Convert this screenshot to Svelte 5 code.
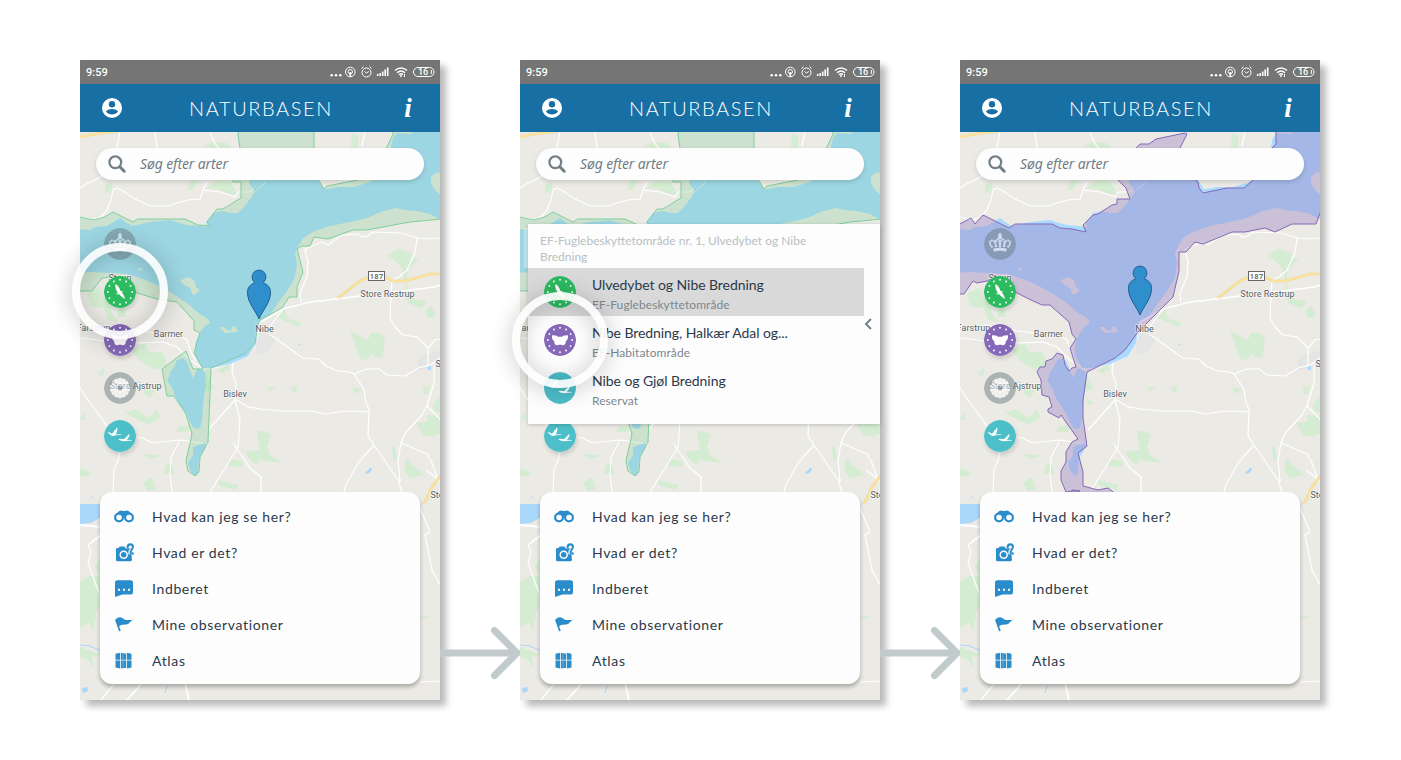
<script>
  const menu = [
    { icon: 'binoculars', label: 'Hvad kan jeg se her?' },
    { icon: 'camera', label: 'Hvad er det?' },
    { icon: 'chat', label: 'Indberet' },
    { icon: 'flag', label: 'Mine observationer' },
    { icon: 'atlas', label: 'Atlas' }
  ];
  const layers = ['crown', 'bird', 'butterfly', 'flower', 'geese'];
  const areas = [
    { icon: 'bird', title: 'Ulvedybet og Nibe Bredning', kind: 'EF-Fuglebeskyttetområde', selected: true },
    { icon: 'butterfly', title: 'Nibe Bredning, Halkær Adal og...', kind: 'EF-Habitatområde' },
    { icon: 'geese', title: 'Nibe og Gjøl Bredning', kind: 'Reservat' }
  ];
  const screens = [
    { zone: 'birds', ring: 183, pinX: 259, pinY: 319 },
    { zone: 'birds', ring: 232, popup: true },
    { zone: 'habitat', pinX: 260, pinY: 315 }
  ];
  const stars = Array.from({ length: 12 }, (_, i) => {
    const a = (i * Math.PI) / 6;
    return { x: 16 + 12.2 * Math.sin(a), y: 16 - 12.2 * Math.cos(a) };
  });

  const zones = {
    birds: '80,217 93,220 105,217 113,212 133,222 138,219 185,219 198,225 211,226 207,222 217,209 223,209 241,198 241,182 233,182 232,180 240,148 238,135 239,130 314,130 314,172 324,189 327,186 358,180 387,147 393,134 393,130 442,130 442,219 410,222 367,230 353,230 328,239 314,237 310,246 302,246 297,249 303,272 297,287 297,297 289,297 282,308 260,320 258,325 255,343 245,354 211,368 208,442 200,457 199,472 195,476 188,471 186,461 192,434 186,414 174,396 167,396 162,369 186,351 193,369 203,369 194,353 200,333 194,330 194,321 177,302 157,299 137,293 125,286 119,277 110,277 102,278 92,291 78,291 78,216',
    habitat: '78,225 91,218 95,224 103,215 129,228 135,224 172,224 180,228 192,229 206,232 203,225 213,215 218,214 232,205 237,204 237,199 250,199 246,188 238,180 250,160 257,147 260,144 269,144 276,139 305,133 307,134 300,148 308,170 315,180 318,182 319,188 323,193 347,188 364,188 373,180 392,148 396,144 396,130 442,130 442,208 436,224 412,224 395,232 385,228 365,232 352,232 323,244 315,242 306,252 299,252 299,271 293,297 270,320 258,332 245,350 235,358 207,372 203,400 203,418 207,446 198,453 203,472 203,486 218,490 228,488 236,494 236,500 192,500 192,490 200,491 192,491 186,492 181,480 181,471 186,462 186,452 192,442 198,439 181,415 179,418 168,412 168,409 172,407 169,397 162,395 161,380 157,372 160,367 165,367 166,361 172,359 177,353 183,355 185,365 189,371 192,368 196,367 190,348 196,339 192,334 189,322 170,305 162,305 151,300 137,293 125,286 112,279 107,281 97,283 93,281 84,294 78,294'
  };

  const water = [
    '78,229 90,230 95,227 107,226 120,218 125,222 132,226 150,222 170,220 176,222 187,225 198,226 207,227 206,222 208,220 213,213 222,211 230,213 238,213 241,210 247,203 253,195 254,190 249,183 250,176 316,176 318,180 324,189.5 337,187 353,187 367,183 375,179 390,150 393,138 397,133 410,134 416,130 442,130 442,172 435,173 431,177 431,183 435,190 442,196 442,220 437,218 430,214 417,211 405,210 397,208 383,211 367,218 350,222 330,226 313,232 303,238 299,245 295,253 297,263 295,277 288,290 278,303 270,315 259,321 256,343 248,356 230,364 210,368.5 202,368 195,355 195,343 200,333 204,327 210,323 208,319 197,312 187,303 170,292 153,283 137,277 127,274 110,273 90,272 78,273',
    '183,358 187,362 190,371 193,378 196,372 198,368 205,372 206,385 204,396 203,407 202,420 200,428 195,429 193,427 190,422 187,415 177,400 172,388 167,380 169,377 170,372 174,367 177,360',
    '193,447 205,443 206,447 203,452 199,458 198,473 195,476 190,470 188,463 193,455'
  ];
  const islands = [
    '180,280 184,279 188,277 194,280 196,287 200,290 197,293 193,295 190,288 183,284',
    '138,268.500 142,268 143,270 139,270.500',
    '219,327 224,327 227,330 231,331 232,327 235,326 238,332 231,332.500 225,333 221,329'
  ];
  const woods = [
    '105,184 113,183 111,192 105,193', '188,190 190,180 198,180 193,189', '203,147 213,142 227,143 231,149',
    '207,188 215,180 230,181 238,195 227,193 217,189', '352,134 358,135 358,148 351,148',
    '87,293 100,288 103,298 110,300 111,312 118,322 108,320 104,308 90,306', '119,309 125,306 125,317 117,317',
    '388,255 398,249 412,253 410,260 419,258 411,267 407,268 407,287 420,307 410,303 405,297 406,285 402,268 397,263',
    '425,310 432,306 435,317 428,318',
    '350,330 357,335 368,340 371,333 380,333 385,340 382,358 376,357 371,353 367,360 360,359',
    '257,430 271,434 267,447 270,455 282,463 260,460 257,465 250,460 245,452 260,450',
    '407,457 412,465 425,475 410,478 404,470', '416,423 427,422 427,415 440,415 440,433 432,437 423,435',
    '433,405 440,395 440,413 434,411', '265,387 275,387 270,392', '291,387 297,386 296,393 292,392',
    '353,387 362,390 354,394', '407,300 427,300 422,308 410,304', '392,448 395,446 397,459 393,460',
    '423,387 430,386 428,394 423,394', '430,310 435,312 433,319', '285,308 287,318 302,323 298,327 288,322 278,318',
    '132,350 144,343 149,352 163,352 167,365 155,370 148,366 138,359', '97,374 105,367 103,376',
    '146,387 155,391 150,397 143,393', '125,412 137,410 148,418 157,410 160,418 150,424 138,420',
    '145,454 159,455 157,458 147,458', '167,462 174,468 173,475 164,473', '143,483 152,477 156,489 147,491',
    '80,468 92,472 87,477 80,476', '205,372 213,388 206,392', '207,398 213,403 207,406',
    '229,459 243,461 242,467 228,466', '217,480 238,485 237,490 220,486', '217,371 228,364 230,369 222,373',
    '82,415 85,412 85,420 81,420', '178,427 190,425 188,432 177,432', '100,558 95,566 99,576 90,576 80,582 80,628 89,622 93,632 96,612 101,604',
    '80,647 101,655 92,657 94,668 88,660 80,657', '420,617 429,616 429,618 420,618'
  ];
  const roads = [
    '80,188 90,182 95,180 106,174', '80,217 92,220 101,217 107,210 111,200 113,190 117,188 123,191 133,198 150,206 168,206 187,200 200,199 203,190 207,182',
    '203,190 220,192 235,197 238,192 250,192 260,183', '120,132 117,148', '155,132 157,148', '210,132 214,142 220,150',
    '365,132 362,146', '440,238 430,239 417,238 402,233 372,232 368,236 362,237 358,234 342,235 328,245 322,242 305,249 308,263 307,277 300,293 301,302',
    '417,238 415,253 407,270 400,276 392,280 391,295 390,318 396,328 403,335 417,337 428,348 428,365', '428,348 435,340 440,339',
    '268,333 303,358 319,359 326,366 338,371 350,372 354,374 367,369 379,369 387,375 405,376 418,368 430,365 440,358',
    '354,374 364,389 366,403 369,409 368,436 374,445 398,480 402,492', '374,445 358,463 345,487 344,492',
    '250,407 260,409 285,411 310,411 326,414 345,411 369,412', '434,363 434,383 427,406 422,415 405,433 401,443 398,460 400,482',
    '401,443 413,448 427,454 432,463 437,477', '427,406 440,419', '233,443 250,468 261,477 261,492',
    '80,338 90,339 105,341 140,343 163,342 177,347 190,360 203,368', '105,325 137,331 165,334 180,336 187,340 190,350 196,361',
    '233,362 232,372 236,383 235,400 240,420 238,447 224,470 210,492', '235,399 250,408', '235,400 208,430',
    '80,388 90,403 103,420 109,430', '137,437 143,438 152,443 180,440 208,444', '180,440 171,457 170,475 172,492',
    '120,452 118,460 114,470 113,492', '101,536 88,545 91,552 88,563 99,593', '88,545 101,534',
    '101,700 115,683', '420,508 430,532 425,535 432,570 440,585', '420,682 440,681', '426,470 440,481'
  ];
</script>

{#snippet glyph(name)}
  <svg class="disc {name}" viewBox="0 0 32 32">
    <circle class="base" cx="16" cy="16" r="16" />
    {#if name === 'bird' || name === 'butterfly'}
      {#each stars as s}<circle cx={s.x} cy={s.y} r="0.95" fill="#fff" />{/each}
    {/if}
    {#if name === 'bird'}
      <path fill="#fff" d="M11.200 8.500c.9-.3 1.900.3 2.600 1.300 1.300 1.500 2 3.200 2.700 4.900 1.600 1.500 2.700 3.400 3.600 5.400.5 1 .7 2 .7 2.900-1.700-.6-3.800-2.400-5.100-4.200-1.800-1.700-3-3.600-3.700-5.400-.6-1.700-.9-3.400-.8-4.900zM15.500 15.500l4-.5-2.500 1.900-1.500 1.500-4.300-.5 3-1z" />
    {:else if name === 'butterfly'}
      <path fill="#fff" d="M8 11.500c2.700-.5 5 .3 7 1.800l.5-.8h1l.5.8c2-1.500 4.300-2.300 7-1.800.4 2.600-.6 4.600-2.200 5.500.1 2.300-.8 4-2.500 4.200-1.100.2-2 0-2.600-.6l-.7.500-.7-.5c-.6.6-1.500.8-2.600.6-1.700-.2-2.600-1.900-2.500-4.200C8.600 16.100 7.600 14.100 8 11.500z" />
    {:else if name === 'geese'}
      <path fill="#fff" d="M3.200 12.200c1.800-.3 3.500.4 4.700 1.700L13.200 7.200c.6 2.600-.3 4.900-1.500 7.100l6 .1v.6l-6.500.3c-1.900 1.200-3.700.5-5.200-.8-.7-.9-1.600-1.600-2.800-2.300zM14.500 19.200c2.300-.7 4.100-.2 5.600.1l5.300-5.500c.4 2.700-1 4.600-2.800 6l5.300.2v.6l-6.500.3c-2.600.7-4.500-.1-6.400-1.100z" />
    {:else if name === 'flower'}
      {#each Array(14) as _, i}
        <path fill="#fff" d="M15 13 14 6.500l2-.7 2 .7L17 13z" transform="rotate({i * 25.71} 16 16)" />
      {/each}
      <circle cx="16" cy="16" r="5.500" fill="#fff" /><circle cx="16" cy="16" r="2.500" fill="#6f7e86" />
    {:else}
      <g fill="none" stroke="#fff" stroke-width="1.900">
        <path d="M8.500 19.500C5 16 5 12.500 8 12.500s4.200 3 3.500 7M23.500 19.500c3.500-3.500 3.500-7 .5-7s-4.200 3-3.500 7M12.500 19c-2-5.500-.5-7.500 1-7.500s2.500 3 2.500 8c0-5 1-8 2.500-8s3 2 1 7.500" stroke-dasharray="2 .6" />
        <path d="M16 4.800v5M14 7h4" stroke-width="1.300" />
        <path d="M9.500 22.200c4-1.200 9-1.200 13 0" stroke-width="3" />
      </g>
      <circle cx="16" cy="9.600" r="2" fill="#fff" />
    {/if}
  </svg>
{/snippet}

{#snippet menuIcon(name)}
  <svg class="mi" viewBox="0 0 20 20" fill="#2b8ccb">
    {#if name === 'binoculars'}
      <path d="M4 5.500C4.600 3.400 7.800 2.800 9 4h2c1.200-1.200 4.400-.6 5 1.500l2.500 4H1.500z" />
      <circle cx="5" cy="10.500" r="3.900" fill="#fdfdfd" stroke="#2b8ccb" stroke-width="2.200" />
      <circle cx="15" cy="10.500" r="3.900" fill="#fdfdfd" stroke="#2b8ccb" stroke-width="2.200" />
      <circle cx="10" cy="9" r="1.300" />
    {:else if name === 'camera'}
      <path d="M3.300 5h1.300l1-1.500h5L11.500 5h5.300L18 17a1.400 1.400 0 0 1-1.300 1.200H3.300A1.300 1.300 0 0 1 2 17V6.300A1.300 1.300 0 0 1 3.300 5z" />
      <circle cx="9.700" cy="11.800" r="3.500" fill="none" stroke="#fdfdfd" stroke-width="1.500" />
      <path d="M13.500 5.500c0-4 5.400-4.500 5.400-1 0 2.500-3.200 2.800-2.400 6.500" fill="none" stroke="#fdfdfd" stroke-width="4.200" />
      <path d="M13.800 5.500 13.600 4c.3-3.600 5.300-3.500 5.300 0 0 2.700-3.200 3-2.400 6.700" fill="none" stroke="#2b8ccb" stroke-width="2.100" />
      <circle cx="18.500" cy="10.500" r="1.300" />
    {:else if name === 'chat'}
      <path d="M3.300 1.200h13.400A2.300 2.300 0 0 1 19 3.500v9.800a2.300 2.300 0 0 1-2.300 2.300H8.500L1 18V3.500a2.300 2.300 0 0 1 2.300-2.300z" />
      <path fill="#fff" d="M4 9.800h2v2H4zM9 9.800h2v2H9zM14 9.800h2v2h-2z" />
    {:else if name === 'flag'}
      <path d="M1 4.800C4.500 1.500 7 1.600 9.600 4c2.800 1.700 6 1 9.400.8-2.200 1.300-3.100 2.600-4.800 4.300-2.600 1.200-6.300-.2-9.100 2.300l1.700 4.400-1.800.5z" />
    {:else}
      <path d="m1.500 2.700 4.700-1v7H1.500zM12.800 1.700l4.700 1v6h-4.700zM1.500 9.600h4.700v8l-4.700-1zM12.800 9.600h4.700v7l-4.700 1z" />
      <path d="m7 1.700 5 1v6H7zM7 9.600h5v7.200l-5 .8z" /><path d="M9 2v15.300" stroke="#7db8e0" stroke-width=".8" />
    {/if}
  </svg>
{/snippet}

{#snippet map(s)}
  <svg class="map" viewBox="80 132 360 568">
    <rect x="80" y="132" width="360" height="568" fill="#ebeae5" />
    <path d="M257 322l13 8 6 9-8 14-12 2zM418 358l22-8v18l-22 2z" fill="#e5e5e6" />
    {#each woods as p}<polygon points={p} fill="#d4ecd1" />{/each}
    <polygon points="80,504 101,504 101,517 91,523 80,524" fill="#aad8fb" />
    <path d="M365 473l6-6 1 3-4 4zM428 367l3-1v4h-3zM298 343l3 2-2 1zM82 688l5-1 1 4-5 2z" fill="#aad8fb" />
    <path d="M80 645l10 1 11 5M90 499l3-3M165 693l2-7" fill="none" stroke="#aad8fb" />
    <g fill="none" stroke="#fff" stroke-width="1.200" stroke-linejoin="round">
      {#each roads as r}<polyline points={r} />{/each}
      <polyline points="80,525 101,527" stroke-width="2" />
      <polyline points="127,700 142,683" stroke-width="1.800" /><polyline points="189,700 185,683" stroke-width="1.800" />
      <polyline points="202,369 213,368 233,362 245,355 257,338 259,323 283,309 310,302 337,299 360,296 410,290 435,287 440,285" stroke-width="1.600" />
      <polyline points="270,327 283,309" />
    </g>
    {#each water as p}<polygon points={p} fill="#aadaff" />{/each}
    {#each islands as p}<polygon points={p} fill="#ebeae5" />{/each}
    <path d="M252 194l14-12" fill="none" stroke="#e8f0ee" />
    <g fill="none" stroke="#f4d58a" stroke-width="2.600">
      <polyline points="80,137 95,134 112,132 125,129" />
      <polyline points="338,298 360,281 370,277 385,277 393,281 405,281 430,274 440,274" />
      <polyline points="441,475 432,487 424,504" />
    </g>
    <g fill="none" stroke="#fde6a0" stroke-width="1.400">
      <polyline points="80,137 95,134 112,132 125,129" />
      <polyline points="338,298 360,281 370,277 385,277 393,281 405,281 430,274 440,274" />
      <polyline points="441,475 432,487 424,504" />
    </g>
    <polygon class="zone {s.zone}" points={zones[s.zone]} />
    <rect x="368.500" y="271.500" width="16" height="9" fill="#fff" stroke="#666" />
    <g class="names">
      <text x="376.700" y="278.800" class="num">187</text>
      <text x="387.500" y="297.300">Store Restrup</text>
      <text x="264.500" y="332.300">Nibe</text>
      <text x="168.500" y="336.800">Barmer</text>
      <text x="235" y="397.300">Bislev</text>
      <text x="135.500" y="389.300">Store Ajstrup</text>
      <text x="93.500" y="331">Farstrup</text>
      <text x="435.500" y="367.300" class="cut">Store</text>
      <text x="430.500" y="498" class="cut">Store</text>
      <text x="120" y="281">Staun</text>
    </g>
    {#if s.pinX}
      <g transform="translate({s.pinX} {s.pinY})" fill="#2e8fcc" stroke="#1f5e8c" stroke-width="1">
        <path d="M0 0C-3-8-11.500-16-11.500-26.500c0-5 2.500-8 7-9.500h9c4.500 1.500 7 4.500 7 9.500C11.500-16 3-8 0 0z" />
        <circle cy="-42" r="6.900" />
        <path d="M-4-37h8v4h-8z" stroke="none" />
      </g>
    {/if}
  </svg>
{/snippet}

{#snippet arrow()}
  <svg class="arrow" viewBox="0 0 80 60">
    <path d="M0 30h77M54.500 7.500 77 30 54.500 52.500" fill="none" stroke="#c2cbcc" stroke-width="7" stroke-linecap="round" stroke-linejoin="round" />
  </svg>
{/snippet}

<main>
  {#each screens as s, i}
    {#if i}{@render arrow()}{/if}
    <section class="phone">
      <div class="status">
        <span>9:59</span>
        <svg viewBox="0 0 108 14" fill="none" stroke="#fff" stroke-width="1">
          <g fill="#fff" stroke="none"><circle cx="3.700" cy="10.300" r="1.300" /><circle cx="8" cy="10.300" r="1.300" /><circle cx="12.300" cy="10.300" r="1.300" /></g>
          <circle cx="22.300" cy="7" r="4.800" /><circle cx="22.300" cy="6.700" r="2.200" /><path d="M22.300 7v5" stroke-width="1.500" />
          <circle cx="38.500" cy="7.500" r="4.500" /><path d="M36.500 6.500l2 1.500 2.300-1.500M33.500 3.500l2-1.900M43.500 3.500l-2-1.900" />
          <path d="M49.700 11V9M52.200 11V8M54.700 11V6.500M57.200 11V4.500M59.700 11V2.500" stroke-width="1.600" />
          <path d="M67 5.500c3.500-3.300 8.500-3.300 12 0M69 7.700c2.500-2.200 5.500-2.200 8 0M71 9.700c1.200-1.100 2.800-1.100 4 0" stroke-width="1.400" /><circle cx="73" cy="11" r="1" fill="#fff" stroke="none" /><path d="M76.500 9v3" />
          <rect x="85.500" y="2.500" width="20.500" height="9" rx="4.500" /><path d="M103.300 5v4" />
          <text x="95" y="10.200" class="batt">16</text>
        </svg>
      </div>
      <header>
        <svg class="user" viewBox="0 0 20 20"><circle cx="10" cy="10" r="10" fill="#fff" /><circle cx="10" cy="6.200" r="3.200" fill="#176fa4" /><path d="M4 13.500c1.800-3.300 10.200-3.300 12 0-2.600 4-9.400 4-12 0z" fill="#176fa4" /></svg>
        <h1>NATURBASEN</h1>
        <i>i</i>
      </header>
      <div class="body">
        {@render map(s)}
        <div class="search">
          <svg viewBox="0 0 18 18" fill="none" stroke="#727f86"><circle cx="7.300" cy="7.300" r="5.900" stroke-width="2.200" /><path d="m11.800 11.800 4.400 4.400" stroke-width="3" stroke-linecap="round" /></svg>
          <span>Søg efter arter</span>
        </div>
        <div class="layers">
          {#each layers as l}{@render glyph(l)}{/each}
        </div>
        {#if s.popup}
          <div class="popup">
            <p>EF-Fuglebeskyttetområde nr. 1, Ulvedybet og Nibe Bredning</p>
            {#each areas as a}
              <div class="area" class:selected={a.selected}>
                {@render glyph(a.icon)}
                <div><b>{a.title}</b><small>{a.kind}</small></div>
              </div>
            {/each}
            <svg class="chev" viewBox="0 0 8 12"><path d="M7 1 2 6l5 5" fill="none" stroke="#76828a" stroke-width="2" /></svg>
          </div>
        {/if}
        <nav>
          {#each menu as m}
            <div class="item">{@render menuIcon(m.icon)}<span>{m.label}</span></div>
          {/each}
        </nav>
      </div>
      {#if s.ring}<div class="ring" style="top: {s.ring}px"></div>{/if}
    </section>
  {/each}
</main>

<style>
  :global(body) { margin: 0; background: #fff; overflow: hidden; }
  main { box-sizing: border-box; display: flex; width: 1401px; height: 760px; padding: 60px 80px; background: #fff; font-family: Lato, sans-serif; }
  .phone { position: relative; flex: none; width: 360px; height: 640px; box-shadow: 6px 6px 7px rgba(0, 0, 0, .28); }
  .arrow { position: relative; z-index: 2; flex: none; width: 80px; height: 60px; margin-top: 563px; }
  .status { box-sizing: border-box; display: flex; align-items: center; justify-content: space-between; height: 24px; padding: 0 4px 0 6px; background: #757575; color: #fff; font: 500 11px Roboto, sans-serif; }
  .status svg { width: 108px; height: 14px; }
  .batt { font: 500 9px Roboto, sans-serif; fill: #fff; stroke: none; text-anchor: middle; }
  header { box-sizing: border-box; display: flex; align-items: center; justify-content: space-between; height: 48px; padding: 0 26px 0 22px; background: #176fa4; color: #fff; }
  .user { width: 20px; height: 20px; }
  h1 { margin: 0 2px 0 0; font: 300 20px Lato, sans-serif; letter-spacing: 1.600px; }
  i { width: 12px; font: italic bold 27px "Liberation Serif", serif; text-align: center; }
  .body { position: relative; display: flex; flex-direction: column; box-sizing: border-box; height: 568px; padding: 16px 16px; }
  .map { position: absolute; inset: 0; width: 360px; height: 568px; }
  .zone { stroke-width: 1; stroke-linejoin: round; }
  .birds { fill: rgba(115, 203, 144, .26); stroke: #7fcf9d; }
  .habitat { fill: rgba(158, 137, 199, .43); stroke: #8468b8; }
  .names { font: 9px Roboto, sans-serif; fill: #565d66; text-anchor: middle; stroke: rgba(255, 255, 255, .6); stroke-width: 1.500px; paint-order: stroke; }
  .num { font-size: 7.500px; font-weight: 500; letter-spacing: .4px; }
  .names .cut { text-anchor: start; }
  .search { position: relative; flex: none; box-sizing: border-box; display: flex; align-items: center; gap: 14px; height: 32px; padding: 0 12px; border-radius: 16px; background: #fdfdfd; box-shadow: 0 2px 4px rgba(0, 0, 0, .15); color: #727f86; font: italic 14px "Noto Sans", sans-serif; letter-spacing: -.12px; }
  .search span { padding-bottom: 2px; }
  .search svg { width: 18px; height: 18px; }
  .layers { position: relative; display: flex; flex-direction: column; gap: 16px; padding: 48px 8px 0; }
  .disc { flex: none; width: 32px; height: 32px; border-radius: 50%; box-shadow: 1px 3px 4px rgba(0, 0, 0, .14); }
  .crown, .flower { opacity: .5; box-shadow: none; }
  .base { fill: #6f7e86; }
  .bird .base { fill: #2dbb61; }
  .butterfly .base { fill: #8569b8; }
  .geese .base { fill: #4cbfc9; }
  .popup { position: absolute; left: 8px; top: 92px; width: 352px; height: 200px; background: #fdfdfd; box-shadow: 0 1px 4px rgba(0, 0, 0, .2); }
  .popup::before { content: ""; position: absolute; left: -4px; top: 4px; width: 4px; height: 40px; background: rgba(255, 255, 255, .3); }
  .popup p { box-sizing: border-box; width: 336px; height: 44px; margin: 0; padding: 9px 40px 0 12px; color: #b9c0c3; font-size: 12px; line-height: 16px; }
  .area { box-sizing: border-box; display: flex; align-items: center; gap: 16px; width: 336px; height: 48px; padding-left: 16px; }
  .selected { background: #d9d9d9; }
  .area .disc { box-shadow: none; }
  .area div { display: flex; flex-direction: column; gap: 2px; padding-top: 6px; }
  .area b { color: #2b394a; font-size: 14px; font-weight: 400; line-height: 18px; letter-spacing: -.07px; }
  .area small { color: #7c888e; font-size: 12px; line-height: 18px; letter-spacing: .07px; }
  .chev { position: absolute; right: 8px; top: 94px; width: 8px; height: 12px; }
  nav { position: absolute; left: 20px; top: 360px; box-sizing: border-box; width: 320px; height: 192px; padding: 7px 14px; border-radius: 12px; background: #fdfdfd; box-shadow: 0 3px 4px rgba(0, 0, 0, .28); }
  .item { display: flex; align-items: center; gap: 18px; height: 36px; color: #2b394a; font-size: 14px; letter-spacing: .64px; }
  .item span { padding-bottom: 2px; }
  .mi { width: 20px; height: 20px; }
  .ring { position: absolute; left: -8px; box-sizing: border-box; width: 96px; height: 96px; border: 8.500px solid rgba(255, 255, 255, .9); border-radius: 50%; filter: drop-shadow(0 2px 10px rgba(0, 0, 0, .32)); }
</style>
